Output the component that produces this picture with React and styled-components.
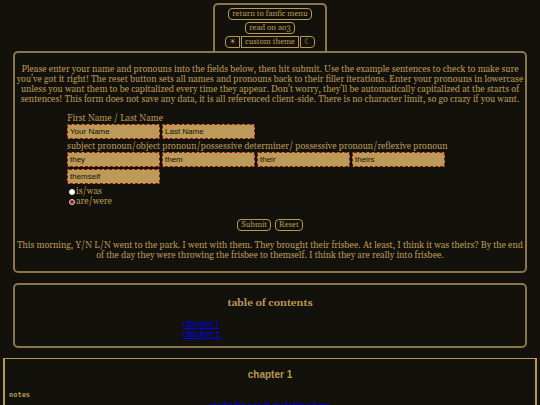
import React, { useState } from "react";
import styled, { createGlobalStyle } from "styled-components";

const gold = "#b99854";
const edge = "#8b754a";
const dark = "#12110c";
const serif = `Georgia, Gelasio, "Liberation Serif", serif`;
const sans = `"Liberation Sans", Arial, sans-serif`;

const GlobalStyle = createGlobalStyle`
  * {
    box-sizing: border-box;
  }

  body {
    margin: 0;
    background: ${dark};
    color: ${gold};
    font-family: ${serif};
    font-size: 9px;
    line-height: 10px;
    overflow-x: hidden;
  }
`;

const Page = styled.div`
  height: 100vh;
  overflow: hidden;
  padding: 3px 3px 0;
`;

const Menu = styled.nav`
  display: flex;
  flex-direction: column;
  align-items: center;
  gap: 2px;
  width: fit-content;
  margin: 0 auto;
  padding: 3px 10px;
  border: 2px solid ${edge};
  border-bottom: none;
  border-radius: 5px 5px 0 0;
`;

const MenuRow = styled.div`
  display: flex;
  gap: 1px;
`;

const Button = styled.button`
  height: 12px;
  margin: 0;
  padding: 0 3px;
  border: 1px solid ${gold};
  border-radius: ${({ $radius }) => $radius || "4px"};
  background: transparent;
  color: ${gold};
  font-family: ${serif};
  font-size: 8px;
  line-height: 10px;
  cursor: pointer;
`;

const MenuLink = styled(Button).attrs({ as: "a" })`
  text-decoration: none;
`;

const ThemeButton = styled(Button)`
  min-width: ${({ $icon }) => ($icon ? "15px" : "0")};
`;

const Panel = styled.section`
  margin: 0 10px 10px;
  border: 2px solid ${edge};
  border-radius: 5px;
  text-align: center;
`;

const FormPanel = styled(Panel)`
  padding: 12px 0 10px;
`;

const Text = styled.p`
  margin: 0;
`;

const Fields = styled.fieldset`
  margin: 9px 52px 0;
  padding: 0;
  border: none;
  text-align: left;
`;

const Label = styled.label`
  display: block;
`;

const FieldRow = styled.div`
  display: flex;
  flex-wrap: wrap;
  gap: 2px;
  margin-bottom: 3px;
`;

const Field = styled.input`
  width: 93px;
  height: 15px;
  padding: 0 2px;
  border: 1px dashed #8b0f0a;
  border-radius: 2px;
  background: #bd9a57;
  color: ${dark};
  font-family: ${sans};
  font-size: 8px;
`;

const RadioLabel = styled.label`
  display: flex;
  align-items: center;
  gap: 1px;
  height: 10px;
  padding-left: 2px;
`;

const Radio = styled.input`
  appearance: none;
  width: 6px;
  height: 6px;
  margin: 0;
  border: 1px solid #fff;
  border-radius: 50%;
  background: #fff;

  &:checked {
    border-color: #f3dada;
    background: #a01822;
  }
`;

const Actions = styled.div`
  display: flex;
  justify-content: center;
  gap: 4px;
  margin: 12px 0 10px;
`;

const Contents = styled(Panel)`
  padding: 12px 0 6px;
`;

const Title = styled.h2`
  margin: 0;
  font-size: 10px;
  line-height: 12px;
`;

const LinkList = styled.div`
  display: flex;
  flex-direction: column;
  align-items: flex-start;
  width: 34%;
  margin: 11px auto 0;
`;

const Link = styled.a`
  color: #0000ee;
`;

const Chapter = styled.article`
  border: 1px solid ${gold};
  border-width: 1px 2px;
  padding: 10px 4px;
`;

const ChapterTitle = styled(Title)`
  font-family: ${sans};
  text-align: center;
`;

const NotesLabel = styled.h3`
  margin: 9px 0 0;
  font-family: "DejaVu Sans Mono", monospace;
  font-size: 7px;
  line-height: 10px;
`;

const Credit = styled.p`
  margin: 2px 0 0;
  text-align: center;
`;

const pronouns = [
  { name: "subject", value: "they" },
  { name: "object", value: "them" },
  { name: "determiner", value: "their" },
  { name: "possessive", value: "theirs" },
  { name: "reflexive", value: "themself" }
];

const App = () => {
  const [verb, setVerb] = useState("were");

  return (
    <>
      <GlobalStyle />
      <Page>
        <Menu>
          <MenuLink href="#menu">return to fanfic menu</MenuLink>
          <MenuLink href="#ao3">read on ao3</MenuLink>
          <MenuRow>
            <ThemeButton $icon $radius="4px 0 0 4px" aria-label="light theme">
              ☀
            </ThemeButton>
            <ThemeButton $radius="0">custom theme</ThemeButton>
            <ThemeButton $icon $radius="0 4px 4px 0" aria-label="dark theme">
              ☾
            </ThemeButton>
          </MenuRow>
        </Menu>

        <FormPanel>
          <Text>
            Please enter your name and pronouns into the fields below, then hit
            submit. Use the example sentences to check to make sure you've got
            it right! The reset button sets all names and pronouns back to their
            filler iterations. Enter your pronouns in lowercase unless you want
            them to be capitalized every time they appear. Don't worry, they'll
            be automatically capitalized at the starts of sentences! This form
            does not save any data, it is all referenced client-side. There is
            no character limit, so go crazy if you want.
          </Text>
          <form onSubmit={e => e.preventDefault()}>
            <Fields>
              <Label htmlFor="first">First Name / Last Name</Label>
              <FieldRow>
                <Field id="first" defaultValue="Your Name" />
                <Field aria-label="Last Name" defaultValue="Last Name" />
              </FieldRow>
              <Label htmlFor="subject">
                subject pronoun/object pronoun/possessive determiner/ possessive
                pronoun/reflexive pronoun
              </Label>
              <FieldRow>
                {pronouns.map(({ name, value }) => (
                  <Field
                    key={name}
                    id={name}
                    aria-label={name}
                    defaultValue={value}
                  />
                ))}
              </FieldRow>
              {["is/was", "are/were"].map(label => (
                <RadioLabel key={label}>
                  <Radio
                    type="radio"
                    name="verb"
                    checked={label.endsWith("/" + verb)}
                    onChange={() => setVerb(label.split("/")[1])}
                  />
                  {label}
                </RadioLabel>
              ))}
            </Fields>
            <Actions>
              <Button type="submit">Submit</Button>
              <Button type="reset">Reset</Button>
            </Actions>
          </form>
          <Text>
            This morning, Y/N L/N went to the park. I went with them. They
            brought their frisbee. At least, I think it was theirs? By the end
            of the day they were throwing the frisbee to themself. I think they
            are really into frisbee.
          </Text>
        </FormPanel>

        <Contents>
          <Title>table of contents</Title>
          <LinkList>
            <Link href="#chapter1">chapter 1</Link>
            <Link href="#chapter2">chapter 2</Link>
          </LinkList>
        </Contents>

        <Chapter id="chapter1">
          <ChapterTitle>chapter 1</ChapterTitle>
          <NotesLabel>notes</NotesLabel>
          <Credit>
            <Link href="#credit">credit for coach matching here</Link>
          </Credit>
        </Chapter>
      </Page>
    </>
  );
};

export default App;
